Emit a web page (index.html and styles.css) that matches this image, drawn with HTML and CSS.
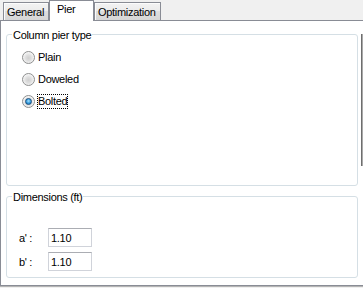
FILE: index.html
```html
<!DOCTYPE html>
<html lang="en">
<head>
    <meta charset="UTF-8">
    <title>Pier</title>
    <link rel="stylesheet" href="styles.css">
</head>
<body>
    <div class="tabs">
        <div class="tab tab-general">General</div>
        <div class="tab tab-active">Pier</div>
        <div class="tab tab-opt">Optimization</div>
    </div>

    <div class="panel">
        <div class="groups">
            <div class="group group-type">
                <div class="group-title">Column pier type</div>
                <div class="options">
                    <div class="option"><span class="radio"></span><span>Plain</span></div>
                    <div class="option"><span class="radio"></span><span>Doweled</span></div>
                    <div class="option"><span class="radio checked"></span><span class="focus">Bolted</span></div>
                </div>
            </div>

            <div class="group group-dims">
                <div class="group-title">Dimensions (ft)</div>
                <div class="fields">
                    <div class="field">
                        <label class="field-label" for="a">a' :</label>
                        <input class="field-input" id="a" type="text" value="1.10">
                    </div>
                    <div class="field">
                        <label class="field-label" for="b">b' :</label>
                        <input class="field-input" id="b" type="text" value="1.10">
                    </div>
                </div>
            </div>
        </div>
        <div class="scroll-edge"></div>
    </div>
</body>
</html>
```

FILE: styles.css
```css
body {
    margin: 0;
    width: 363px;
    height: 288px;
    overflow: hidden;
    background: #f0f0f0;
    font-family: "Liberation Sans", Arial, sans-serif;
    font-size: 11px;
    letter-spacing: -0.3px;
    color: #000;
}

/* tab strip */
.tabs {
    display: flex;
    align-items: flex-end;
    height: 20px;
    padding-left: 3px;
}
.tab {
    box-sizing: border-box;
    height: 18px;
    padding-top: 1px;
    border: 1px solid #898c95;
    border-bottom: none;
    background: linear-gradient(#f3f3f3, #ebebeb 50%, #dedede 50%, #d6d6d6);
    box-shadow: inset 1px 1px #fcfcfc;
    line-height: 16px;
    white-space: nowrap;
}
.tab-general {
    width: 46px;
    padding-left: 3px;
}
.tab-active {
    position: relative;
    z-index: 1;
    width: 45px;
    height: 21px;
    margin-bottom: -1px;
    padding-top: 0;
    padding-left: 7px;
    background: #fff;
    box-shadow: none;
}
.tab-opt {
    width: 67px;
    padding-left: 3px;
}

/* page */
.panel {
    box-sizing: border-box;
    display: flex;
    align-items: flex-start;
    height: 266px;
    padding: 13px 0 0 5px;
    background: #fff;
    border-top: 1px solid #898c95;
    border-left: 1px solid #898c95;
    border-bottom: 1px solid #898c95;
    box-shadow: 0 1px #b4b4b4;
}
.groups {
    display: flex;
    flex-direction: column;
    gap: 10px;
}
.scroll-edge {
    width: 2px;
    height: 132px;
    margin-left: 3px;
    background: linear-gradient(to right, #6e6e6e 1px, #a9a9a9 1px);
}

/* group boxes */
.group {
    box-sizing: border-box;
    width: 352px;
    border: 1px solid #d5dfe5;
    border-radius: 3px;
}
.group-type {
    height: 152px;
}
.group-dims {
    height: 82px;
}
.group-title {
    width: fit-content;
    margin: -6px 0 0 5px;
    padding: 0 1px;
    line-height: 13px;
    background: #fff;
}

/* radio buttons */
.options {
    margin-top: 4px;
    padding-left: 15px;
}
.option {
    display: flex;
    align-items: center;
    height: 22px;
}
.radio {
    box-sizing: border-box;
    display: flex;
    align-items: center;
    justify-content: center;
    width: 13px;
    height: 13px;
    margin-right: 3px;
    border: 1px solid #8e8f8f;
    border-radius: 50%;
    background: radial-gradient(circle at 50% 55%, #cfcfcf 0, #dedede 35%, #f6f6f6 70%, #fdfdfd 100%);
}
.radio.checked::after {
    content: "";
    width: 5px;
    height: 5px;
    border-radius: 50%;
    border: 1px solid #1c5180;
    background: radial-gradient(circle at 50% 40%, #a6e2ff 0, #2b93d8 60%, #1a6cad 100%);
}
.focus {
    line-height: 13px;
    outline: 1px dotted #000;
}

/* dimension fields */
.fields {
    display: flex;
    flex-direction: column;
    gap: 5px;
    margin-top: 24px;
    padding-left: 12px;
}
.field {
    display: flex;
    align-items: center;
}
.field-label {
    width: 29px;
}
.field-input {
    box-sizing: border-box;
    width: 44px;
    height: 19px;
    margin: 0;
    padding: 0 0 0 2px;
    border: 1px solid #d0d3da;
    border-top-color: #abadb3;
    font: inherit;
    letter-spacing: inherit;
    color: #000;
}
```
